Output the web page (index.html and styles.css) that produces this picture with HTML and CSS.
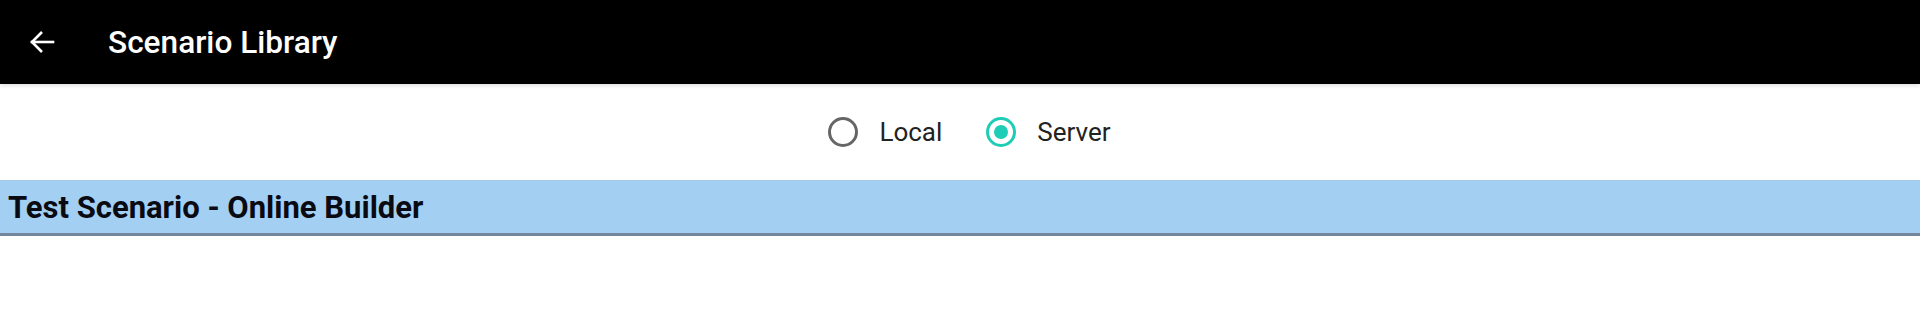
FILE: index.html
```html
<!DOCTYPE html>
<html>
<head>
<meta charset="utf-8">
<link rel="stylesheet" href="styles.css">
</head>
<body>
<header class="appbar">
  <svg class="back" width="26" height="26" viewBox="0 0 26 26" fill="none" stroke="#fff" stroke-width="2.6" stroke-linecap="square">
    <line x1="3" y1="13" x2="24" y2="13"/>
    <polyline points="13,3 3,13 13,23" stroke-linecap="butt" stroke-linejoin="miter"/>
  </svg>
  <span class="title">Scenario Library</span>
</header>
<div class="radios">
  <label class="radio"><span class="dot"></span><span class="rlabel">Local</span></label>
  <label class="radio"><span class="dot on"></span><span class="rlabel">Server</span></label>
</div>
<div class="row">Test Scenario - Online Builder</div>
</body>
</html>
```
FILE: styles.css
```css
html, body { margin: 0; padding: 0; background: #fff; }
body { font-family: Roboto, "Liberation Sans", sans-serif; width: 1920px; height: 320px; overflow: hidden; }
.appbar {
  height: 84px;
  background: #000;
  display: flex;
  align-items: center;
  box-shadow: 0 2px 4px rgba(0,0,0,0.12);
  position: relative;
}
.back { margin-left: 29px; }
.title {
  margin-left: 53px;
  color: #fff;
  font-size: 31.6px;
  font-weight: 500;
}
.radios {
  height: 96px;
  display: flex;
  justify-content: center;
  align-items: center;
  padding-left: 19px;
  gap: 44px;
}
.radio { display: flex; align-items: center; }
.dot {
  width: 24px; height: 24px;
  border: 3px solid #666;
  border-radius: 50%;
  box-sizing: content-box;
  position: relative;
}
.dot.on { border-color: #1fcdb6; }
.dot.on::after {
  content: "";
  position: absolute;
  left: 5px; top: 5px;
  width: 14px; height: 14px;
  border-radius: 50%;
  background: #1fcdb6;
}
.rlabel { margin-left: 21px; font-size: 26px; color: #222; }
.row {
  height: 52px;
  background: #a3cff2;
  border-top: 1px solid #a9cae6;
  border-bottom: 3px solid #73869a;
  padding-left: 8px;
  display: flex;
  align-items: center;
  font-size: 31px;
  font-weight: 700;
  color: #0a0a12;
}
```
